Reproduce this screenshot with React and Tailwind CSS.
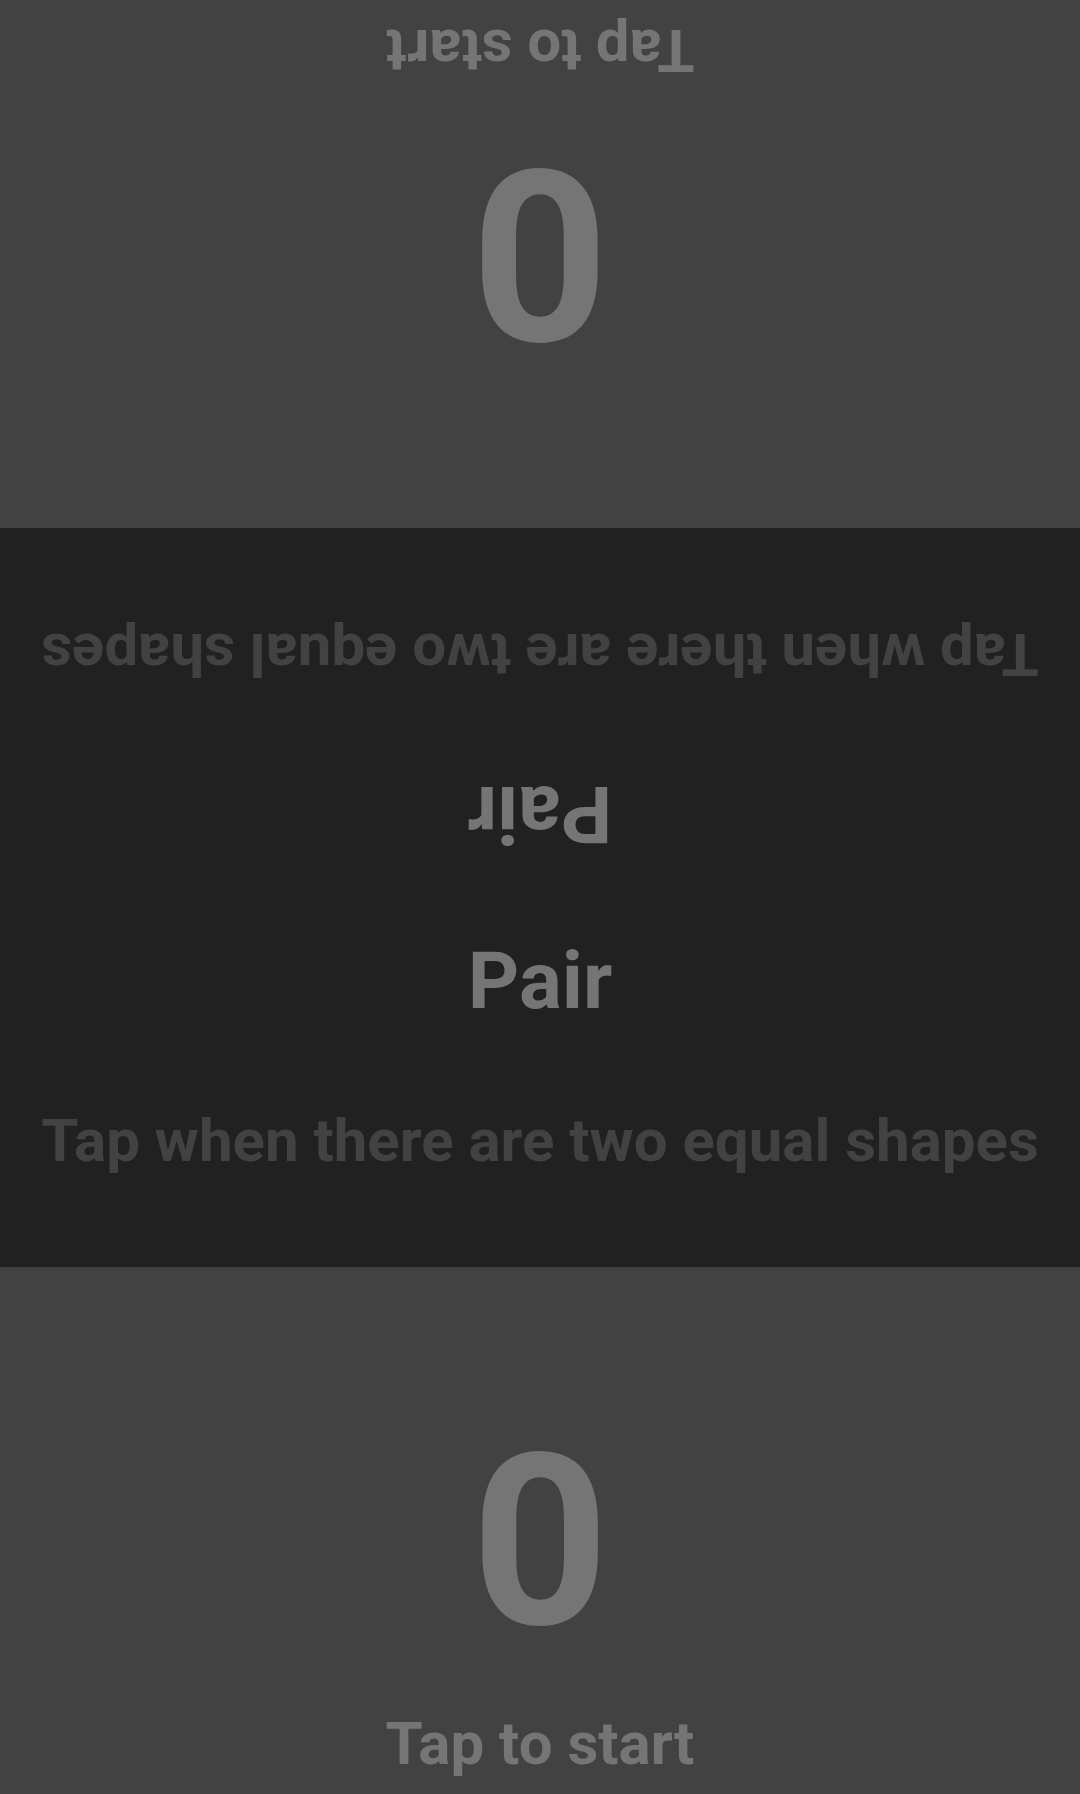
const font = { fontFamily: 'Roboto, "Noto Sans", sans-serif' };

const PlayerPanel = ({ score, label, flipped, className }) => (
  <div
    className={`flex flex-col items-center justify-end bg-[#424242] pb-5 ${flipped ? 'rotate-180' : ''} ${className}`}
  >
    <div className="text-[240px] leading-none font-bold text-[#757575] mb-[52px]">{score}</div>
    <div className="text-[60px] leading-none font-bold text-[#757575]">{label}</div>
  </div>
);

const RuleHalf = ({ title, hint, flipped }) => (
  <div
    className={`flex-1 flex flex-col items-center justify-end pb-[96px] ${flipped ? 'rotate-180' : ''}`}
  >
    <div className="text-[80px] leading-none font-bold text-[#757575] mb-[90px]">{title}</div>
    <div className="text-[60px] leading-none font-bold text-[#424242] whitespace-nowrap">{hint}</div>
  </div>
);

const App = () => {
  return (
    <div className="w-[1080px] h-[1794px] flex flex-col overflow-hidden select-none" style={font}>
      <PlayerPanel score={0} label="Tap to start" flipped className="h-[528px]" />
      <div className="h-[739px] flex flex-col bg-[#212121]">
        <RuleHalf title="Pair" hint="Tap when there are two equal shapes" flipped />
        <RuleHalf title="Pair" hint="Tap when there are two equal shapes" />
      </div>
      <PlayerPanel score={0} label="Tap to start" className="h-[527px]" />
    </div>
  );
};

export default App;
